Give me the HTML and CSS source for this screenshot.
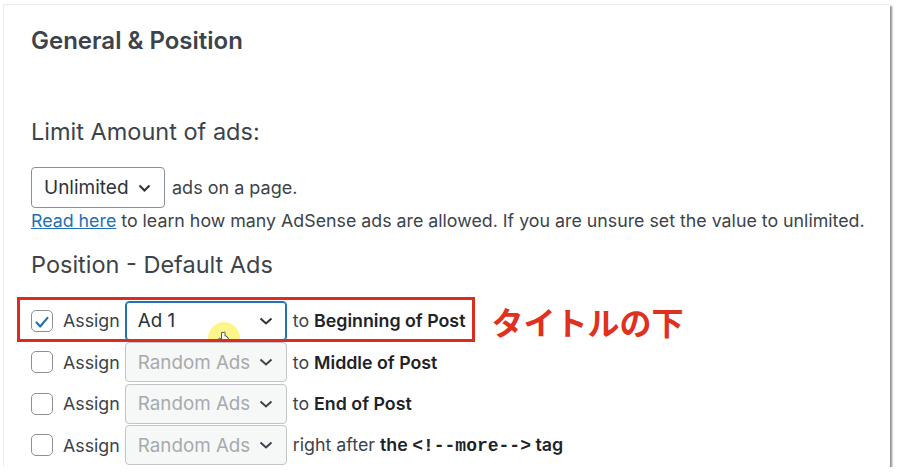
FILE: index.html
```html
<!DOCTYPE html>
<html lang="en">
<head>
    <meta charset="UTF-8">
    <meta name="viewport" content="width=device-width, initial-scale=1.0">
    <title>General &amp; Position</title>
    <link rel="stylesheet" href="styles.css">
</head>
<body>
    <div class="panel">
        <h2 class="title">General &amp; Position</h2>

        <h3 class="section section-limit">Limit Amount of ads:</h3>
        <div class="limit">
            <span class="select select-limit">Unlimited
                <svg class="chevron" width="13" height="8" viewBox="0 0 13 8"><path d="M1.5 1.5l5 5 5-5" fill="none" stroke="#2c3338" stroke-width="2"/></svg>
            </span>
            <span>ads on a page.</span>
        </div>
        <p class="hint"><a href="#">Read here</a> to learn how many AdSense ads are allowed. If you are unsure set the value to unlimited.</p>

        <h3 class="section section-position">Position - Default Ads</h3>

        <div class="positions">
            <div class="row">
                <div class="assign assign-marked">
                    <span class="checkbox checked">
                        <svg width="22" height="22" viewBox="0 0 22 22"><path d="M5 11.5l4 4.5 8-9.5" fill="none" stroke="#2271b1" stroke-width="2.4" stroke-linecap="round" stroke-linejoin="round"/></svg>
                    </span>
                    <span class="label">Assign</span>
                    <span class="select select-ad active">Ad 1
                        <svg class="chevron" width="14" height="8" viewBox="0 0 14 8"><path d="M1.5 1.5l5.5 5 5.5-5" fill="none" stroke="#2c3338" stroke-width="2"/></svg>
                        <span class="pointer">
                            <svg width="12" height="14" viewBox="0 0 12 14"><path d="M3.5 1.5v7l-1.5-1.3c-.7-.5-1.6.2-1.1 1l2.6 3.8c.5.7 1.2 1 2 1h2.6c1.3 0 2.3-1 2.3-2.3V7.2c0-.6-.8-.8-1.1-.3V6c0-.6-.8-.8-1.1-.3v-.4c0-.6-.9-.8-1.2-.2V1.5c0-.9-1.5-.9-1.5 0z" fill="#fff" stroke="#333" stroke-width=".8"/></svg>
                        </span>
                    </span>
                    <span class="where">to <b>Beginning of Post</b></span>
                </div>
                <span class="note">タイトルの下</span>
            </div>

            <div class="row">
                <div class="assign">
                    <span class="checkbox"></span>
                    <span class="label">Assign</span>
                    <span class="select select-ad disabled">Random Ads
                        <svg class="chevron" width="14" height="8" viewBox="0 0 14 8"><path d="M1.5 1.5l5.5 5 5.5-5" fill="none" stroke="#2c3338" stroke-width="2"/></svg>
                    </span>
                    <span class="where">to <b>Middle of Post</b></span>
                </div>
            </div>

            <div class="row">
                <div class="assign">
                    <span class="checkbox"></span>
                    <span class="label">Assign</span>
                    <span class="select select-ad disabled">Random Ads
                        <svg class="chevron" width="14" height="8" viewBox="0 0 14 8"><path d="M1.5 1.5l5.5 5 5.5-5" fill="none" stroke="#2c3338" stroke-width="2"/></svg>
                    </span>
                    <span class="where">to <b>End of Post</b></span>
                </div>
            </div>

            <div class="row">
                <div class="assign">
                    <span class="checkbox"></span>
                    <span class="label">Assign</span>
                    <span class="select select-ad disabled">Random Ads
                        <svg class="chevron" width="14" height="8" viewBox="0 0 14 8"><path d="M1.5 1.5l5.5 5 5.5-5" fill="none" stroke="#2c3338" stroke-width="2"/></svg>
                    </span>
                    <span class="where">right after <b>the <code>&lt;!--more--&gt;</code> tag</b></span>
                </div>
            </div>
        </div>
    </div>
</body>
</html>
```

FILE: styles.css
```css
body {
    margin: 0;
    background-color: #fff;
    font-family: Inter, "Noto Sans", sans-serif;
    color: #3c434a;
}

.panel {
    box-sizing: border-box;
    width: 887px;
    height: 463px;
    margin: 4px 0 0 3px;
    padding: 22px 0 0 27px;
    background-color: #fff;
    border-top: 1px solid #ececec;
    border-left: 1px solid #ececec;
    box-shadow: 2px 2px 2px rgba(0, 0, 0, 0.45);
    overflow: hidden;
}

.title {
    margin: 0;
    font-size: 24px;
    line-height: 28px;
    font-weight: 600;
    color: #3c434a;
}

.section {
    margin: 0;
    font-size: 23.5px;
    line-height: 28px;
    font-weight: 400;
    color: #3c434a;
}

.section-limit {
    margin-top: 63px;
}

.section-position {
    margin-top: 18px;
}

.limit {
    display: flex;
    align-items: center;
    gap: 7px;
    margin-top: 21px;
    font-size: 18px;
}

.hint {
    margin: 1px 0 0;
    font-size: 17.8px;
    line-height: 24px;
}

.hint a {
    color: #2271b1;
}

.select {
    box-sizing: border-box;
    display: inline-flex;
    align-items: center;
    justify-content: space-between;
    height: 41px;
    padding: 0 13px 0 12px;
    border: 1px solid #8c8f94;
    border-radius: 4px;
    background-color: #fff;
    font-size: 19px;
    color: #2c3338;
}

.select-limit {
    width: 134px;
}

.select-ad {
    position: relative;
    width: 162px;
    height: 40px;
    padding: 0 13px 0 12px;
    font-size: 18.8px;
}

.select.active {
    border-color: #2271b1;
    box-shadow: inset 0 0 0 1px #2271b1;
}

.select.disabled {
    background-color: #f6f7f7;
    border-color: #c3c4c7;
    color: #a7aaad;
}

.select.disabled .chevron path {
    stroke: #3c434a;
}

.pointer {
    position: absolute;
    left: 82px;
    top: 20px;
    width: 32px;
    height: 32px;
    border-radius: 50%;
    background-color: rgba(250, 240, 60, 0.6);
    display: flex;
    align-items: center;
    justify-content: center;
}

.positions {
    margin-top: 21px;
}

.row {
    display: flex;
    align-items: center;
    height: 41.5px;
}

.assign {
    display: flex;
    align-items: center;
    font-size: 17.8px;
    color: #3c434a;
}

.assign-marked {
    position: relative;
}

.assign-marked::after {
    content: "";
    position: absolute;
    top: -4px;
    bottom: -1px;
    left: -14px;
    right: -10px;
    border: 3px solid #dc2c1f;
    pointer-events: none;
}

.checkbox {
    box-sizing: border-box;
    width: 22px;
    height: 22px;
    border: 1px solid #8c8f94;
    border-radius: 5px;
    background-color: #fff;
    margin-right: 10px;
    display: flex;
}

.label {
    margin-right: 5px;
}

.where {
    margin-left: 6px;
}

.where b {
    font-weight: 600;
    color: #1d2327;
}

code {
    font-family: "Liberation Mono", monospace;
    font-size: 18px;
    font-weight: 700;
}

.note {
    margin-left: 26px;
    font-family: "Noto Sans CJK JP", sans-serif;
    font-size: 32px;
    font-weight: 700;
    color: #e0301e;
}
```
